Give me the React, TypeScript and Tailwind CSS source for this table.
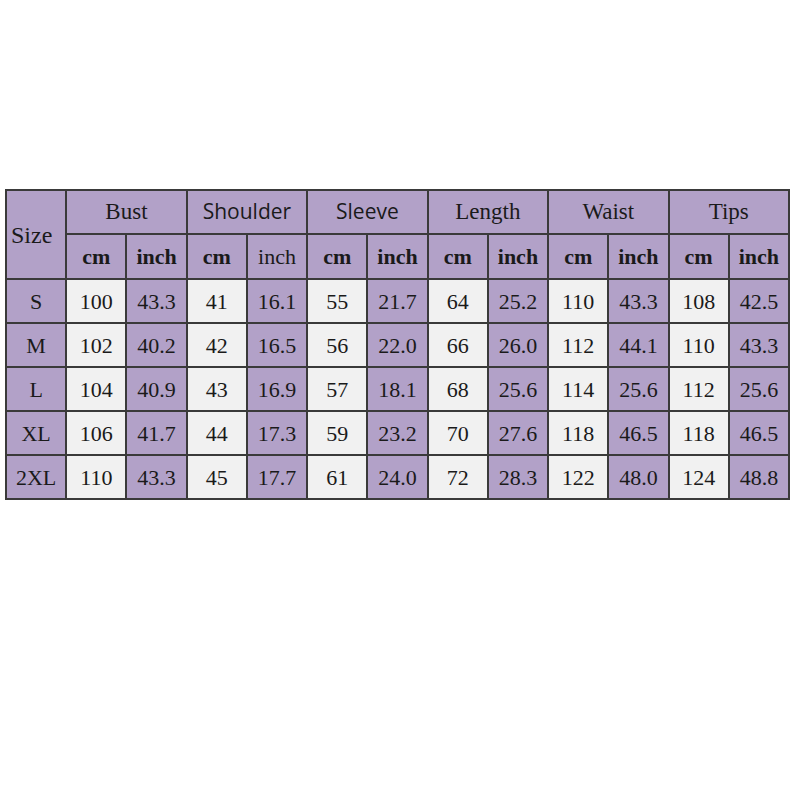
import React from 'react';

const groups = ['Bust', 'Shoulder', 'Sleeve', 'Length', 'Waist', 'Tips'];

const rows = [
  ['S', '100', '43.3', '41', '16.1', '55', '21.7', '64', '25.2', '110', '43.3', '108', '42.5'],
  ['M', '102', '40.2', '42', '16.5', '56', '22.0', '66', '26.0', '112', '44.1', '110', '43.3'],
  ['L', '104', '40.9', '43', '16.9', '57', '18.1', '68', '25.6', '114', '25.6', '112', '25.6'],
  ['XL', '106', '41.7', '44', '17.3', '59', '23.2', '70', '27.6', '118', '46.5', '118', '46.5'],
  ['2XL', '110', '43.3', '45', '17.7', '61', '24.0', '72', '28.3', '122', '48.0', '124', '48.8'],
];

const serif = 'font-["Liberation_Serif",serif]';
const sans = 'font-["Open_Sans","Noto_Sans",sans-serif]';

export default function App() {
  return (
    <div className="w-[800px] h-[800px] bg-white pt-[189px] pl-[5px]">
      <div className="w-[785px] grid grid-cols-13 grid-rows-[42px_43px_repeat(5,42px)] gap-[2px] p-[2px] bg-[#3a3a3a] text-[#1a1a1a]">
        {/* header */}
        <div className={`row-span-2 bg-[#b2a1c8] flex items-center justify-start pl-[4px] text-[24px] ${serif}`}>
          Size
        </div>
        {groups.map((g) => (
          <div
            key={g}
            className={`col-span-2 bg-[#b2a1c8] flex items-center justify-center ${
              g === 'Shoulder' || g === 'Sleeve' ? `text-[21px] ${sans}` : `text-[23px] ${serif}`
            }`}
          >
            {g}
          </div>
        ))}
        {groups.map((g) => (
          <React.Fragment key={g + '-units'}>
            <div className={`bg-[#b2a1c8] flex items-center justify-center text-[22px] font-bold ${serif}`}>cm</div>
            <div
              className={`bg-[#b2a1c8] flex items-center justify-center text-[22px] ${serif} ${
                g === 'Shoulder' ? 'font-normal' : 'font-bold'
              }`}
            >
              inch
            </div>
          </React.Fragment>
        ))}

        {/* data */}
        {rows.map((r) =>
          r.map((v, i) => (
            <div
              key={r[0] + i}
              className={`flex items-center justify-center text-[22px] ${serif} ${
                i % 2 === 0 ? 'bg-[#b2a1c8]' : 'bg-[#f1f1f1]'
              }`}
            >
              {v}
            </div>
          ))
        )}
      </div>
    </div>
  );
}
